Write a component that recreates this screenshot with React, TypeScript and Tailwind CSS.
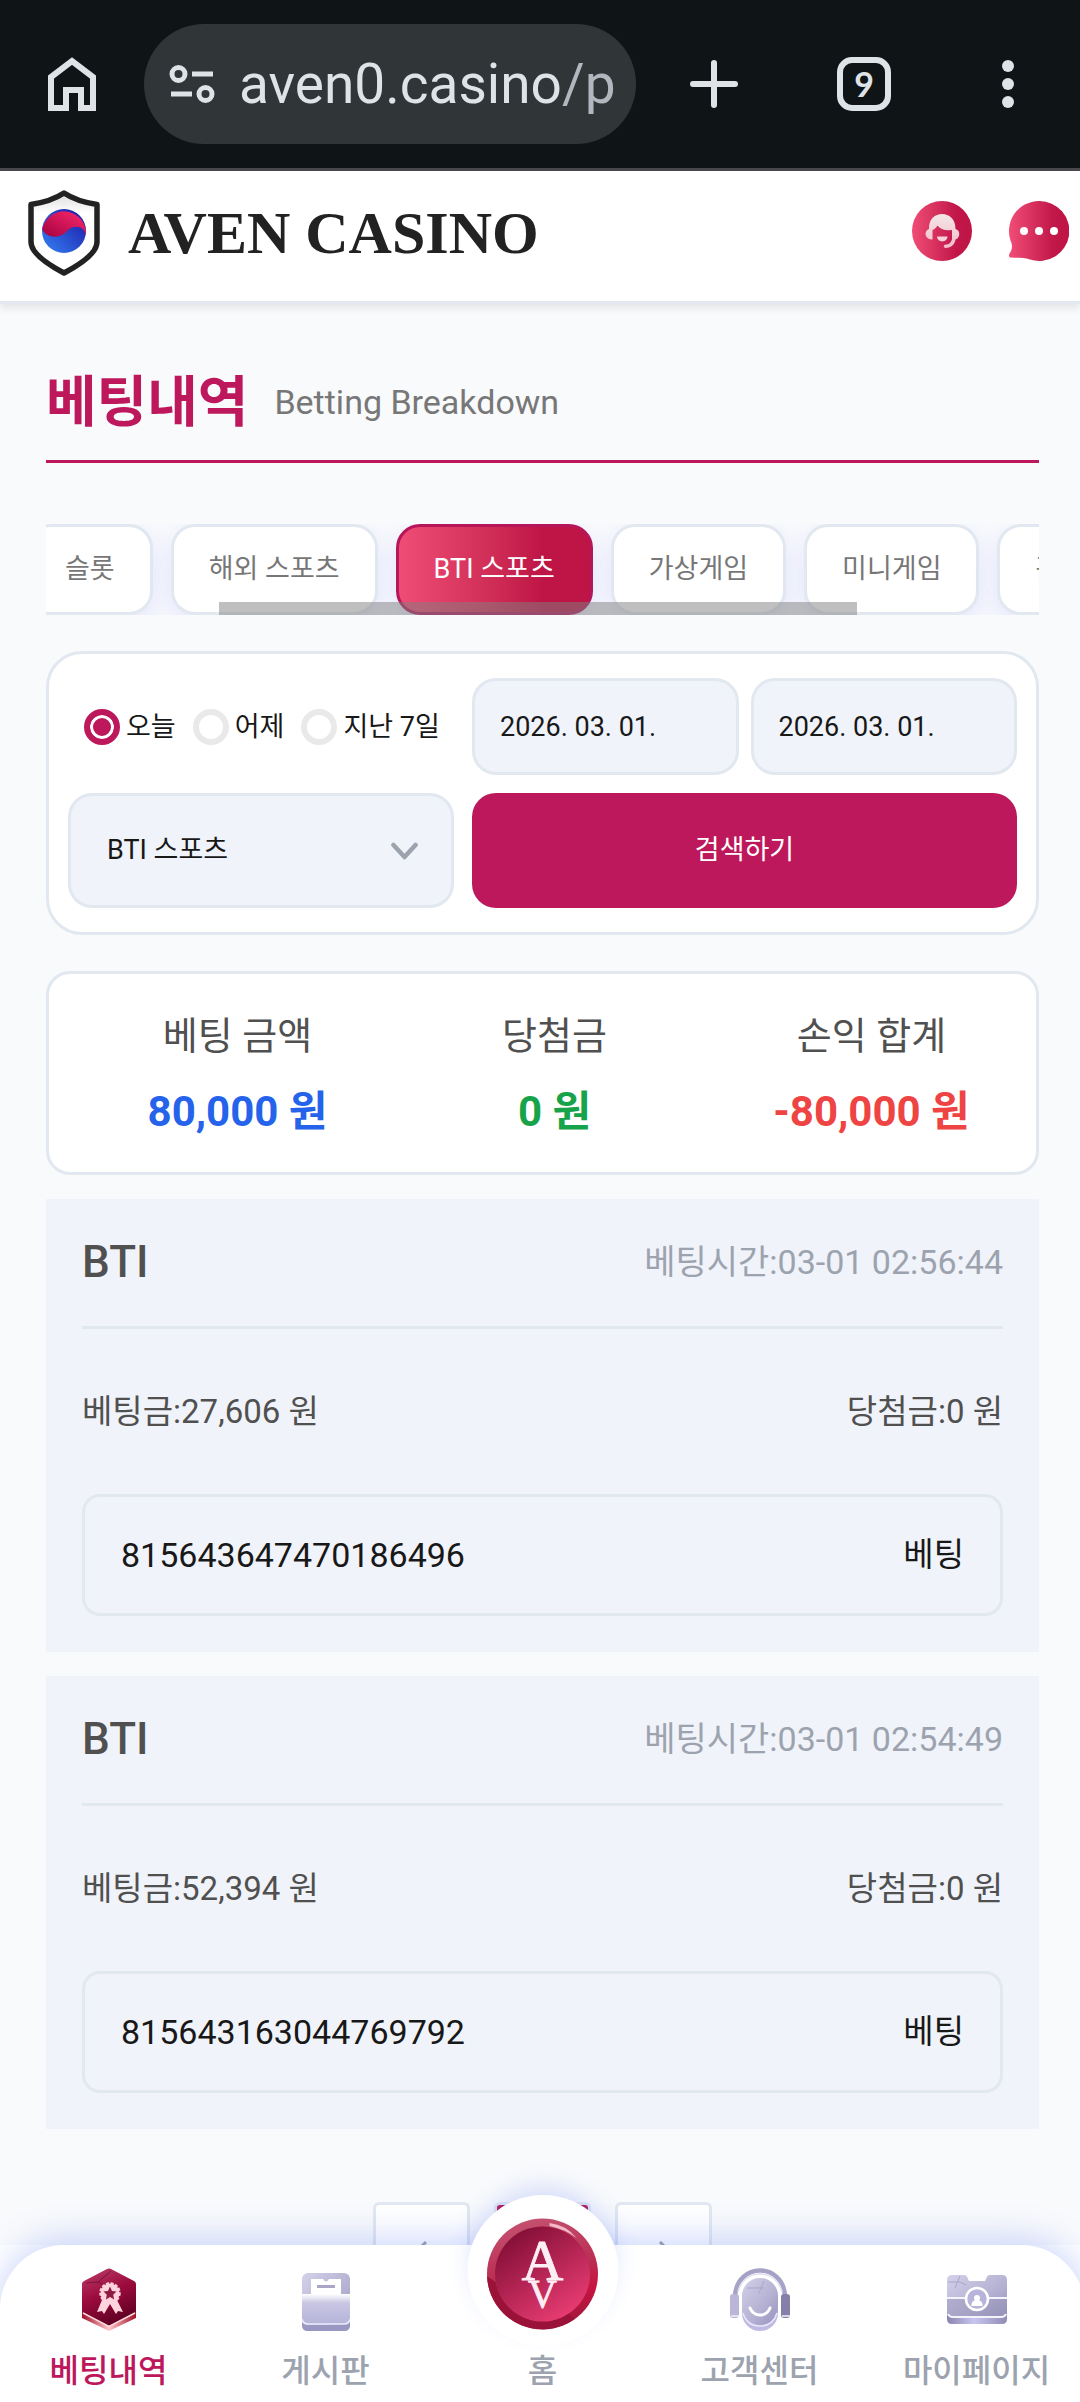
import { useState } from "react";

const tabs = ["슬롯", "해외 스포츠", "BTI 스포츠", "가상게임", "미니게임", "홀덤"];

const bets = [
  { time: "03-01 02:56:44", stake: "27,606", win: "0", id: "815643647470186496" },
  { time: "03-01 02:54:49", stake: "52,394", win: "0", id: "815643163044769792" },
];

function BrowserBar() {
  return (
    <div className="flex h-[171px] shrink-0 items-center border-b-3 border-[#47494c] bg-[#0f1417] pl-12">
      <button aria-label="홈페이지">
        <svg width="48" height="54" viewBox="0 0 48 54" fill="none" stroke="#dfe2e6" strokeWidth="6">
          <path d="M3 51V20L24 4l21 16v31H33V33H18v18Z" />
        </svg>
      </button>
      <div className="ml-12 flex h-[120px] w-[492px] items-center rounded-full bg-[#303538] pl-[25px]">
        <svg width="46" height="40" viewBox="0 0 46 40" fill="none" stroke="#dfe2e6" strokeWidth="5">
          <circle cx="9.500" cy="10" r="6.500" />
          <path d="M23 10h21M2 30h21" />
          <circle cx="36.500" cy="30" r="6.500" />
        </svg>
        <span className="ml-6 whitespace-nowrap font-[Roboto,sans-serif] text-[55px] leading-[64px] text-[#dfe2e6]">
          aven0.casino<span className="text-[#b3b6be]">/p</span>
        </span>
      </div>
      <div className="flex flex-1 items-center pl-[54px]">
        <button aria-label="새 탭">
          <svg width="48" height="48" viewBox="0 0 48 48" stroke="#dfe2e6" strokeWidth="6" strokeLinecap="round">
            <path d="M24 3v42M3 24h42" />
          </svg>
        </button>
        <button
          aria-label="탭 전환"
          className="ml-[99px] flex size-[54px] items-center justify-center rounded-[15px] border-6 border-[#dfe2e6] font-[Lato,sans-serif] text-[34px] leading-none font-bold text-[#dfe2e6]"
        >
          9
        </button>
        <button aria-label="메뉴" className="ml-[111px]">
          <svg width="12" height="48" viewBox="0 0 12 48" fill="#dfe2e6">
            <circle cx="6" cy="6" r="6" />
            <circle cx="6" cy="24" r="6" />
            <circle cx="6" cy="42" r="6" />
          </svg>
        </button>
      </div>
    </div>
  );
}

function ShieldLogo() {
  return (
    <svg width="72" height="86" viewBox="0 0 72 86">
      <defs>
        <linearGradient id="taegukRed" x1="1" y1="0" x2="0" y2="1">
          <stop offset="0" stopColor="#fb2a6c" />
          <stop offset="1" stopColor="#a5003f" />
        </linearGradient>
        <linearGradient id="taegukBlue" x1="1" y1="0" x2="0" y2="1">
          <stop offset="0" stopColor="#1a12a2" />
          <stop offset="1" stopColor="#3682f5" />
        </linearGradient>
        <linearGradient id="shieldFill" x1="0" y1="0" x2="0" y2="1">
          <stop offset="0" stopColor="#dcdcdc" />
          <stop offset="0.250" stopColor="#ffffff" />
        </linearGradient>
      </defs>
      <path
        d="M36 3C27 9 16 12.500 3 14.500V52c0 10 14 21 33 31 19-10 33-21 33-31V14.500C56 12.500 45 9 36 3Z"
        fill="url(#shieldFill)"
        stroke="#222"
        strokeWidth="5.500"
        strokeLinejoin="round"
      />
      <circle cx="36" cy="41" r="22" fill="url(#taegukBlue)" />
      <path d="M14 41A22 22 0 0 1 58 46C57 36 46 34 40 40 33 49 19 49 14 39Z" fill="url(#taegukRed)" />
    </svg>
  );
}

function Header() {
  return (
    <header className="relative z-10 flex h-[133px] shrink-0 items-center justify-between border-b-3 border-[#e2e8ee] bg-white pr-[11px] pb-1.5 pl-7 shadow-[0_4px_8px_rgba(0,0,0,0.09)]">
      <a href="#home" className="flex items-center gap-7 text-[#222]">
        <ShieldLogo />
        <span className="whitespace-nowrap font-['Liberation_Serif',serif] text-[60px] leading-[66px] font-bold">
          AVEN CASINO
        </span>
      </a>
      <div className="flex items-center gap-[37px] pb-1">
        <button aria-label="상담원">
          <svg width="60" height="60" viewBox="0 0 60 60">
            <defs>
              <linearGradient id="rose" x1="0" y1="0" x2="1" y2="0">
                <stop offset="0" stopColor="#f04d76" />
                <stop offset="0.750" stopColor="#c01648" />
                <stop offset="1" stopColor="#be1546" />
              </linearGradient>
              <linearGradient id="hair" x1="0" y1="0" x2="0" y2="1">
                <stop offset="0" stopColor="#f4e7e9" />
                <stop offset="1" stopColor="#f3bcc8" />
              </linearGradient>
            </defs>
            <circle cx="30" cy="30" r="30" fill="url(#rose)" />
            <path
              d="M17 28C16 8 44 8 43.500 28c5 1 5 9 0 10.500C43 43 39 47 34 47c-3 0-3-3.500 0-3.500 3 0 5-2 6-5V29c-7 1-12-1-14.500-4.500C24 27 22 28.500 20.500 29v9.500c-8 0-9-8.500-3.500-10.500Z"
              fill="url(#hair)"
            />
            <path d="M25 35.500h10.500c-.5 6.500-10 6.500-10.500 0Z" fill="#f6d3da" />
          </svg>
        </button>
        <button aria-label="채팅">
          <svg width="60" height="60" viewBox="0 0 60 60">
            <path
              d="M30 0a30 30 0 1 1-9 58.500C15 56 8 57 2 56.500c-2 0-2.500-2-1.500-4C3 49 3.500 46 2.500 42A30 30 0 0 1 30 0Z"
              fill="url(#rose)"
            />
            <g fill="#fff">
              <circle cx="15" cy="30" r="4" />
              <circle cx="30" cy="30" r="4" />
              <circle cx="45" cy="30" r="4" />
            </g>
          </svg>
        </button>
      </div>
    </header>
  );
}

function CategoryTabs() {
  const [active, setActive] = useState("BTI 스포츠");
  return (
    <div className="relative mt-[61px] overflow-hidden">
      <div role="tablist" className="-ml-[19px] flex gap-[18px]">
        {tabs.map((t) => (
          <button
            key={t}
            role="tab"
            aria-selected={t === active}
            onClick={() => setActive(t)}
            className={
              "h-[91px] shrink-0 whitespace-nowrap rounded-3xl border-3 px-[35px] pb-0.5 text-[27px] leading-10 shadow-[0_8px_24px_rgba(110,120,255,0.16)] " +
              (t === active
                ? "border-[#b5175a] bg-linear-to-r from-[#f04d76] to-[#be1546] to-75% text-white"
                : "border-[#e2e8f0] bg-white text-[#777]")
            }
          >
            {t}
          </button>
        ))}
      </div>
      <div className="absolute bottom-0 left-[17.4%] h-[13px] w-[64.3%] bg-[#808080]/50" />
    </div>
  );
}

function SearchForm() {
  const [range, setRange] = useState("오늘");
  const field = "w-full min-w-0 rounded-3xl border-3 border-[#e2e8f0] bg-[#f0f3f9] text-[27px] text-[#181818]";
  return (
    <form
      onSubmit={(e) => e.preventDefault()}
      className="mt-9 grid grid-cols-[386fr_545fr] gap-[18px] rounded-[36px] border-3 border-[#e2e8f0] bg-white px-[19px] py-6"
    >
      <div className="flex items-center gap-[17px] pl-4 whitespace-nowrap">
        {["오늘", "어제", "지난 7일"].map((r) => (
          <label key={r} className="flex items-center gap-1.5 text-[27px] leading-10 text-[#181818]">
            <input
              type="radio"
              name="range"
              checked={range === r}
              onChange={() => setRange(r)}
              className="size-9 appearance-none rounded-full border-6 border-[#e9e9e9] bg-white checked:border-[#bc185b] checked:bg-[#bc185b] checked:shadow-[inset_0_0_0_3px_white]"
            />
            {r}
          </label>
        ))}
      </div>
      <div className="grid grid-cols-2 gap-3">
        <input aria-label="시작일" type="text" defaultValue="2026. 03. 01." className={field + " h-[97px] pl-[25px]"} />
        <input aria-label="종료일" type="text" defaultValue="2026. 03. 01." className={field + " h-[97px] pl-[25px]"} />
      </div>
      <div className="relative">
        <select aria-label="게임 종류" className={field + " h-[115px] appearance-none pl-9"}>
          <option>BTI 스포츠</option>
          <option>해외 스포츠</option>
        </select>
        <svg
          className="pointer-events-none absolute top-1/2 right-9 -translate-y-1/2"
          width="27"
          height="18"
          viewBox="0 0 27 18"
          fill="none"
          stroke="#9ca3af"
          strokeWidth="4.500"
          strokeLinecap="round"
          strokeLinejoin="round"
        >
          <path d="M2.500 3 13.500 15 24.500 3" />
        </svg>
      </div>
      <button type="submit" className="h-[115px] rounded-3xl bg-[#bc185b] text-[27px] text-white">
        검색하기
      </button>
    </form>
  );
}

function Summary() {
  return (
    <dl className="mt-9 grid h-[204px] grid-cols-3 rounded-3xl border-3 border-[#e2e8f0] bg-white pt-[34px] pr-1.5 pl-[30px] text-center">
      <div>
        <dt className="text-[38px] leading-[56px] text-[#505050]">베팅 금액</dt>
        <dd className="mt-5 text-[42px] leading-[56px] font-bold text-[#2563eb]">80,000 원</dd>
      </div>
      <div>
        <dt className="text-[38px] leading-[56px] text-[#505050]">당첨금</dt>
        <dd className="mt-5 text-[42px] leading-[56px] font-bold text-[#16a34a]">0 원</dd>
      </div>
      <div>
        <dt className="text-[38px] leading-[56px] text-[#505050]">손익 합계</dt>
        <dd className="mt-5 text-[42px] leading-[56px] font-bold text-[#ef4444]">-80,000 원</dd>
      </div>
    </dl>
  );
}

function BetCard({ bet }: { bet: (typeof bets)[number] }) {
  return (
    <article className="mt-6 bg-[#f0f3f9] p-9">
      <div className="flex items-center justify-between border-b-3 border-[#e2e8f0] pb-9 leading-[55px]">
        <h2 className="text-[44px] font-medium text-[#505050]">BTI</h2>
        <span className="text-[34px] text-[#9ca3af]">베팅시간:{bet.time}</span>
      </div>
      <div className="flex justify-between py-[57px] text-[33px] leading-[51px] text-[#505050]">
        <span>베팅금:{bet.stake} 원</span>
        <span>당첨금:{bet.win} 원</span>
      </div>
      <div className="flex h-[122px] items-center justify-between rounded-[18px] border-3 border-[#e2e8f0] px-9 text-[34px] text-[#181818]">
        <span>{bet.id}</span>
        <span className="text-[33px]">베팅</span>
      </div>
    </article>
  );
}

function Pagination() {
  const box = "flex size-[97px] items-center justify-center rounded-md border-3 border-[#e2e8f0] text-[27px]";
  return (
    <div className="mt-[73px] flex justify-center gap-6 pb-12">
      <button aria-label="이전" className={box + " bg-white"}>
        <svg width="14" height="22" viewBox="0 0 14 22" fill="none" stroke="#9ca3af" strokeWidth="3">
          <path d="M11 2 2 11l9 9" />
        </svg>
      </button>
      <button aria-label="1 페이지" aria-current="page" className={box + " bg-[#bc185b]"} />
      <button aria-label="다음" className={box + " bg-white"}>
        <svg width="14" height="22" viewBox="0 0 14 22" fill="none" stroke="#9ca3af" strokeWidth="3">
          <path d="m3 2 9 9-9 9" />
        </svg>
      </button>
    </div>
  );
}

function BadgeIcon() {
  return (
    <svg width="56" height="64" viewBox="0 0 56 64">
      <defs>
        <linearGradient id="hexTop" x1="0.200" y1="0" x2="0.600" y2="1">
          <stop offset="0" stopColor="#b83a66" />
          <stop offset="0.450" stopColor="#9c0b3d" />
          <stop offset="1" stopColor="#5c0022" />
        </linearGradient>
        <linearGradient id="hexEdge" x1="0" y1="0" x2="1" y2="0">
          <stop offset="0" stopColor="#a00f28" />
          <stop offset="0.500" stopColor="#ffc9cc" />
          <stop offset="1" stopColor="#a00f28" />
        </linearGradient>
      </defs>
      <path d="M28 6 55 20v30L28 63 1 50V20Z" fill="url(#hexEdge)" />
      <path d="M26 1q2-1 4 0l23 12q2 1 2 3v26q0 2-2 3L30 57q-2 1-4 0L3 45q-2-1-2-3V16q0-2 2-3Z" fill="url(#hexTop)" />
      <path d="M2 45 28 58.500 54 45" fill="none" stroke="#ffdadd" strokeWidth="1.500" />
      <path d="m5 15 12-1 13-11M17 14l6 3" fill="none" stroke="#7c1238" strokeWidth="1" />
      <path d="m21 32-5 12 5-1 2 3 6-10 6 10 2-3 5 1-6-12Z" fill="#ffd3de" />
      <circle cx="29" cy="25" r="9.500" fill="#ffd3de" stroke="#ffd3de" strokeWidth="2.500" strokeDasharray="3 1.500" />
      <path d="m29 18.500 2 4.500 4.500.5-3.300 3.200.9 4.800-4.100-2.500-4.100 2.500.9-4.800-3.300-3.200 4.500-.5Z" fill="#8f1a42" />
    </svg>
  );
}

function BoardIcon() {
  return (
    <svg width="50" height="64" viewBox="0 0 50 64">
      <defs>
        <linearGradient id="lilac" x1="0" y1="0" x2="1" y2="1">
          <stop offset="0" stopColor="#d4d1ea" />
          <stop offset="0.600" stopColor="#b3b0d2" />
          <stop offset="1" stopColor="#9692bd" />
        </linearGradient>
        <linearGradient id="pocket" x1="0" y1="0" x2="0" y2="1">
          <stop offset="0" stopColor="#ffffff" />
          <stop offset="0.300" stopColor="#c9c6e2" />
          <stop offset="1" stopColor="#b5b4d9" />
        </linearGradient>
      </defs>
      <rect x="1" y="5" width="48" height="58" rx="6" fill="url(#lilac)" />
      <path d="M1 53v4q0 6 6 6h36q6 0 6-6v-4q-1 4-6 4H7q-5 0-6-4Z" fill="#9a97c2" />
      <path d="M10 11h12q3 5 6 0h12v18H10Z" fill="#fff" />
      <path d="M16 18.500h18" stroke="#a9a6c8" strokeWidth="3" />
      <path d="M1 26h48v25q0 5-6 5H7q-6 0-6-5Z" fill="url(#pocket)" />
      <path d="M1 51q1 5 6 5h36q5 0 6-5" fill="none" stroke="#eceafa" strokeWidth="1.500" />
    </svg>
  );
}

function SupportIcon() {
  return (
    <svg width="62" height="64" viewBox="0 0 62 64">
      <path d="M6 28C8-6 54-6 56 28" fill="none" stroke="#a5a2c6" strokeWidth="4.500" />
      <path d="M9 24C14 0 48 0 53 24" fill="none" stroke="#e0def0" strokeWidth="1.500" />
      <rect x="13" y="11" width="36" height="52" rx="18" fill="#bebae3" />
      <rect x="13" y="10" width="36" height="47" rx="18" fill="url(#lilac)" />
      <path d="M14 45q4 13 17 13t17-13" fill="none" stroke="#e9e7fa" strokeWidth="1.500" />
      <path d="M21 40q3 7 10 7t10-7" fill="none" stroke="#fff" strokeWidth="3" strokeLinecap="round" />
      <path d="m18 20 17 0M35 13l-5 12" fill="none" stroke="#a9a6c8" strokeWidth="1" />
      <rect x="1" y="26" width="9" height="24" rx="3" fill="#b9b6d8" />
      <rect x="52" y="26" width="9" height="24" rx="3" fill="#8480aa" />
      <path d="M2 48h8M53 48h8" stroke="#f2f1fa" strokeWidth="1.500" />
    </svg>
  );
}

function MyPageIcon() {
  return (
    <svg width="62" height="64" viewBox="0 0 62 64">
      <defs>
        <linearGradient id="ledge" x1="0" y1="0" x2="1" y2="0">
          <stop offset="0" stopColor="#8884ad" />
          <stop offset="0.450" stopColor="#c9c5f1" />
          <stop offset="1" stopColor="#8f8bb4" />
        </linearGradient>
      </defs>
      <path d="M1 40h60v11q0 5-5 5H6q-5 0-5-5Z" fill="url(#ledge)" />
      <path d="M6 7h12q3 0 4 4l1 2h16l1-2q1-4 4-4h12q5 0 5 5v32q0 5-5 5H6q-5 0-5-5V12q0-5 5-5Z" fill="url(#lilac)" />
      <path d="M1 30h60v14q0 5-5 5H6q-5 0-5-5Z" fill="#9491b5" fillOpacity="0.400" />
      <path d="M2 46q1 3 5 3h48q4 0 5-3M1 30h60" fill="none" stroke="#f4f3fb" strokeWidth="2" />
      <path d="m2 14 12 0M14 8l-5 12M14 14l6 3" fill="none" stroke="#a9a6c8" strokeWidth="1" />
      <circle cx="31" cy="31" r="11" fill="#b7b4da" stroke="#fff" strokeWidth="2.500" />
      <circle cx="31" cy="30" r="3" fill="#fff" />
      <path d="M25.500 38v-2q1-4 5.500-4t5.500 4v2Z" fill="#fff" />
    </svg>
  );
}

function CoinIcon() {
  return (
    <svg width="112" height="112" viewBox="0 0 112 112">
      <defs>
        <linearGradient id="coinRim" x1="0.400" y1="0" x2="0.600" y2="1">
          <stop offset="0" stopColor="#c4506f" />
          <stop offset="0.450" stopColor="#bb2f54" />
          <stop offset="0.700" stopColor="#c81440" />
          <stop offset="1" stopColor="#9c1840" />
        </linearGradient>
        <linearGradient id="coinFace" x1="0.200" y1="0.100" x2="0.750" y2="0.900">
          <stop offset="0" stopColor="#861038" />
          <stop offset="1" stopColor="#e33a70" />
        </linearGradient>
      </defs>
      <circle cx="56" cy="56" r="55.500" fill="url(#coinRim)" />
      <path d="M.5 58A55.500 55.500 0 0 0 88 101L80 94A47 47 0 0 1 9 64Z" fill="#9b1238" />
      <circle cx="56" cy="56" r="47.500" fill="url(#coinFace)" />
      <path d="M63 5q17 2 27 15-12-9-27-12Z" fill="#f2b9c8" />
      <g
        fill="#fdeef5"
        stroke="#fdeef5"
        strokeWidth="0.800"
        fontFamily="Liberation Serif, serif"
        textAnchor="middle"
      >
        <text x="56" y="62" fontSize="58">A</text>
        <text x="56" y="89" fontSize="40">V</text>
      </g>
    </svg>
  );
}

function BottomNav() {
  const item = "flex flex-1 flex-col items-center text-[32px] leading-[46px] font-medium whitespace-nowrap";
  return (
    <div className="relative z-10 -mr-[5px] h-[157px] shrink-0 bg-white">
      <nav className="relative flex h-full rounded-t-[64px] bg-white pt-[23px] text-[#9ca3af] shadow-[0_-4px_36px_rgba(70,110,240,0.3)]">
        <a href="#bets" className={item + " text-[#bc185b]"}>
          <BadgeIcon />
          <span className="mt-4">베팅내역</span>
        </a>
        <a href="#board" className={item}>
          <BoardIcon />
          <span className="mt-4">게시판</span>
        </a>
        <a href="#home" className={item + " relative"}>
          <span className="absolute -top-[73px] left-1/2 flex size-[151px] -translate-x-1/2 items-center justify-center rounded-full bg-white pt-1.5 shadow-[0_-12px_24px_-4px_rgba(70,110,240,0.2)]">
            <CoinIcon />
          </span>
          <span className="mt-20">홈</span>
        </a>
        <a href="#support" className={item}>
          <SupportIcon />
          <span className="mt-4">고객센터</span>
        </a>
        <a href="#mypage" className={item}>
          <MyPageIcon />
          <span className="mt-4">마이페이지</span>
        </a>
      </nav>
    </div>
  );
}

export default function App() {
  return (
    <div className="flex h-screen flex-col overflow-hidden bg-[#f9fafc] font-[Roboto,'Noto_Sans_CJK_KR',sans-serif]">
      <BrowserBar />
      <Header />
      <main className="min-h-0 flex-1 overflow-y-auto pr-[41px] pl-[46px] [scrollbar-width:none]">
        <div className="flex items-center gap-[26px] border-b-3 border-[#bc185b] pt-16 pb-6">
          <h1 className="text-[55px] leading-[68px] font-bold text-[#bc185b]">베팅내역</h1>
          <span className="text-[34px] leading-[68px] text-[#777]">Betting Breakdown</span>
        </div>
        <CategoryTabs />
        <SearchForm />
        <Summary />
        {bets.map((b) => (
          <BetCard key={b.id} bet={b} />
        ))}
        <Pagination />
      </main>
      <BottomNav />
    </div>
  );
}
